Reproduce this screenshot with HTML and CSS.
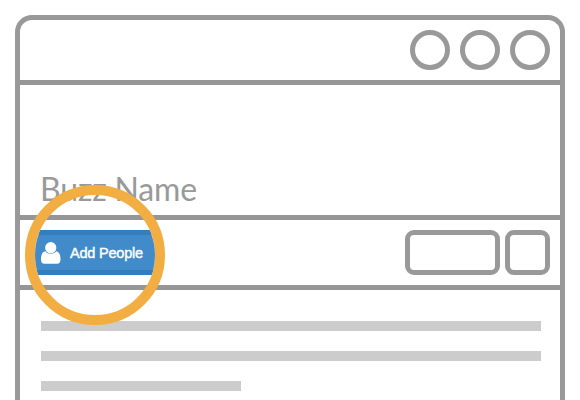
FILE: index.html
```html
<!DOCTYPE html>
<html lang="en">
<head>
<meta charset="utf-8">
<title>Buzz Name</title>
<link rel="stylesheet" href="styles.css">
</head>
<body>
<main class="window">
  <header class="titlebar">
    <span class="dot"></span><span class="dot"></span><span class="dot"></span>
  </header>
  <section class="banner"><h1 class="name">Buzz Name</h1></section>
  <section class="toolbar">
    <span class="box wide"></span><span class="box"></span>
  </section>
  <section class="content">
    <div class="line"></div>
    <div class="line"></div>
    <div class="line short"></div>
  </section>
  <div class="lens">
    <div class="button">
      <svg class="person" viewBox="0 0 20 22" width="20" height="22"><path d="M4.4 9.2C1.2 9.6 0 13 0 17.5C0 20.3 1.2 21.8 3.4 21.8H16.1C18.3 21.8 19.5 20.3 19.5 17.5C19.5 13 18.3 9.6 15.1 9.2C13.8 11 12 11.7 9.75 11.7S5.7 11 4.4 9.2Z"/><circle cx="9.75" cy="5.7" r="5.6"/></svg>
      <span class="label">Add People</span>
    </div>
  </div>
</main>
</body>
</html>
```
FILE: styles.css
```css
* { box-sizing: border-box; }
body { margin: 0; padding: 15px 15px 0; height: 400px; overflow: hidden; background: #fff; }
.window {
  position: relative;
  width: 550px;
  height: 385px;
  border: 5px solid #999;
  border-bottom: 0;
  border-radius: 17px 17px 0 0;
}
.titlebar {
  display: flex;
  justify-content: flex-end;
  gap: 10px;
  height: 65px;
  padding: 10px;
  border-bottom: 5px solid #969696;
}
.dot { width: 40px; height: 40px; border: 5px solid #999; border-radius: 50%; }
.banner {
  display: flex;
  align-items: flex-end;
  height: 135px;
  padding: 0 20px 6px;
  border-bottom: 5px solid #969696;
}
.name { margin: 0; font: 400 32px/40px Lato, sans-serif; color: #999; white-space: nowrap; letter-spacing: -0.15px; }
.toolbar {
  display: flex;
  justify-content: flex-end;
  gap: 5px;
  height: 70px;
  padding: 10px;
  border-bottom: 5px solid #969696;
}
.box { width: 45px; height: 45px; border: 5px solid #999; border-radius: 9px; }
.wide { width: 95px; }
.content { display: flex; flex-direction: column; gap: 20px; padding: 31px 19px 0 21px; }
.line { height: 10px; background: #ccc; }
.short { width: 200px; }
.lens {
  position: absolute;
  left: 5px;
  top: 165px;
  display: flex;
  align-items: center;
  width: 140px;
  height: 140px;
  border: 10px solid #f2ae43;
  border-radius: 50%;
  overflow: hidden;
}
.button {
  display: flex;
  align-items: center;
  width: 120px;
  height: 45px;
  flex: none;
  margin-top: -5px;
  padding-left: 6px;
  gap: 9px;
  background: #428bca;
  border: solid #357ebd;
  border-width: 5px 0;
}
.person { fill: #fff; flex: none; }
.label { font: 14.5px/20px "Liberation Sans", Arial, sans-serif; letter-spacing: -0.2px; color: #fff; -webkit-text-stroke: 0.4px #fff; white-space: nowrap; }
```
